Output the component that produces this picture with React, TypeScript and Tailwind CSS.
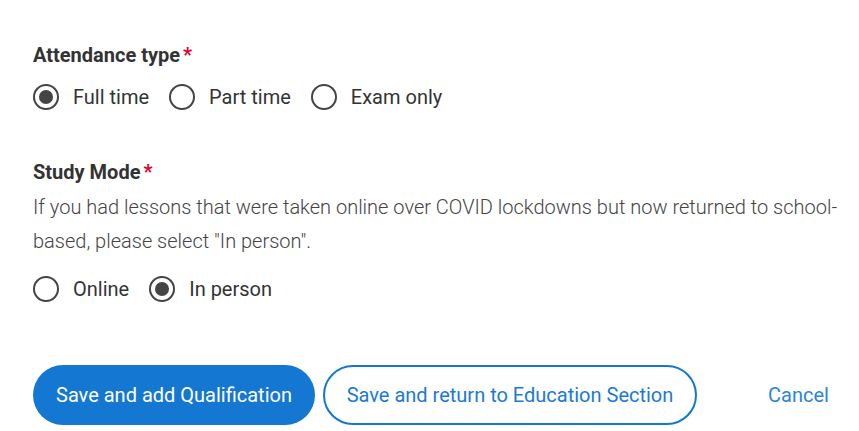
import React, { useState } from "react";

interface RadioOption {
  value: string;
  label: string;
}

const Radio = ({
  name,
  options,
  value,
  onChange,
}: {
  name: string;
  options: RadioOption[];
  value: string;
  onChange: (v: string) => void;
}) => {
  return (
    <div className="flex items-center gap-5 h-[30px]">
      {options.map((opt) => (
        <label key={opt.value} className="flex items-center gap-[14px] cursor-pointer">
          <input
            type="radio"
            name={name}
            className="sr-only"
            checked={value === opt.value}
            onChange={() => onChange(opt.value)}
          />
          <span className="w-[26px] h-[26px] rounded-full border-2 border-[#444] flex items-center justify-center">
            {value === opt.value && <span className="w-[14px] h-[14px] rounded-full bg-[#444]" />}
          </span>
          <span className="text-[20px] text-[#333]">{opt.label}</span>
        </label>
      ))}
    </div>
  );
};

const Heading = ({ children }: { children: React.ReactNode }) => (
  <h2 className="text-[20px] leading-[28px] font-bold text-[#333]">
    {children}
    <span className="text-[#e4002b] ml-[3px]">*</span>
  </h2>
);

export default function App() {
  const [attendance, setAttendance] = useState("full");
  const [mode, setMode] = useState("person");

  return (
    <div
      className="min-h-screen bg-white pl-[33px] pr-[14px] pt-[41px]"
      style={{ fontFamily: "Roboto, 'Liberation Sans', sans-serif" }}
    >
      {/* Attendance type */}
      <Heading>Attendance type</Heading>
      <div className="mt-[13px]">
        <Radio
          name="attendance"
          value={attendance}
          onChange={setAttendance}
          options={[
            { value: "full", label: "Full time" },
            { value: "part", label: "Part time" },
            { value: "exam", label: "Exam only" },
          ]}
        />
      </div>

      {/* Study mode */}
      <div className="mt-[46px]">
        <Heading>Study Mode</Heading>
      </div>
      <p className="mt-[4px] text-[20px] leading-[34px] font-light text-[#444]">
        If you had lessons that were taken online over COVID lockdowns but now returned to school-based, please
        select "In person".
      </p>
      <div className="mt-[16px]">
        <Radio
          name="mode"
          value={mode}
          onChange={setMode}
          options={[
            { value: "online", label: "Online" },
            { value: "person", label: "In person" },
          ]}
        />
      </div>

      {/* Actions */}
      <div className="mt-[61px] flex items-center">
        <button className="h-[60px] w-[282px] rounded-full bg-[#1477d2] text-white text-[20px]">
          Save and add Qualification
        </button>
        <button className="ml-2 h-[60px] w-[374px] rounded-full border-2 border-[#1477d2] text-[#1a7ad4] text-[20px] bg-white">
          Save and return to Education Section
        </button>
        <button className="ml-[71px] text-[#2a86d8] text-[20px]">Cancel</button>
      </div>
    </div>
  );
}
